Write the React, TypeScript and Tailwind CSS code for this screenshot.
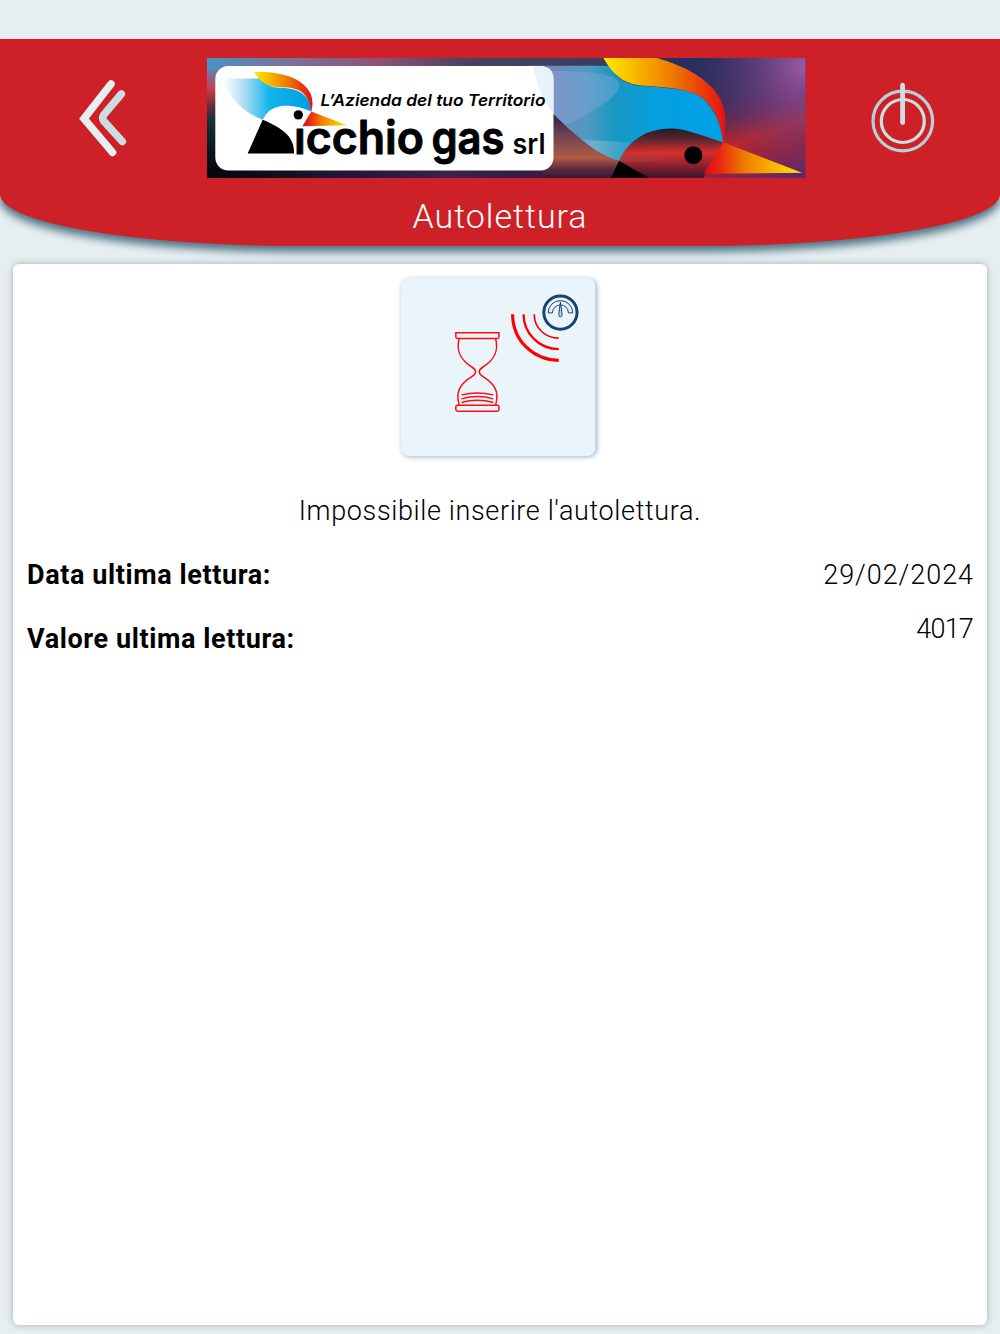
function BackIcon() {
  return (
    <svg viewBox="0 0 90 120" className="w-[90px] h-[120px]" fill="none" strokeLinecap="round" strokeLinejoin="miter">
      <path d="M61.3 34 L44 54.6 Q41.5 58 44 61.4 L62.3 81.5" stroke="#ccdde2" strokeWidth="7.6" />
      <path d="M51 24 L24 58.6 L52.5 92.4" stroke="#e6eef0" strokeWidth="7.6" />
    </svg>
  );
}

function PowerIcon() {
  return (
    <svg viewBox="0 0 110 120" className="w-[110px] h-[120px]" fill="none">
      <circle cx="52.8" cy="61" r="29.8" stroke="#b5d0d6" strokeWidth="3.2" />
      <circle cx="52.8" cy="61" r="21.5" stroke="#ccdfe3" strokeWidth="3.2" />
      <path d="M52.6 25.2V62.6" stroke="#ccdfe3" strokeWidth="4.8" strokeLinecap="round" />
    </svg>
  );
}

function Logo() {
  return (
    <svg viewBox="0 0 598.5 120" className="w-[598.5px] h-[120px] overflow-hidden" preserveAspectRatio="none">
      <defs>
        <linearGradient id="edge" x1="0" y1="0" x2="0" y2="1">
          <stop offset="0" stopColor="#4793c4" />
          <stop offset=".14" stopColor="#806f96" />
          <stop offset=".27" stopColor="#c43c48" />
          <stop offset=".4" stopColor="#692d3c" />
          <stop offset=".52" stopColor="#12333b" />
          <stop offset=".8" stopColor="#08151a" />
          <stop offset="1" stopColor="#050509" />
        </linearGradient>
        <linearGradient id="top" x1="0" y1="0" x2="1" y2="0">
          <stop offset="0" stopColor="#4793c4" />
          <stop offset=".2" stopColor="#7c7199" />
          <stop offset=".42" stopColor="#8f5274" />
          <stop offset=".64" stopColor="#46425f" />
          <stop offset="1" stopColor="#3a3b60" />
        </linearGradient>
        <linearGradient id="bottom" x1="0" y1="0" x2="1" y2="0">
          <stop offset="0" stopColor="#050509" />
          <stop offset=".3" stopColor="#1e1530" />
          <stop offset=".6" stopColor="#3a2148" />
          <stop offset="1" stopColor="#35173a" />
        </linearGradient>
        <linearGradient id="warm" x1="0" y1="0" x2="0" y2="1">
          <stop offset="0" stopColor="#3a3358" />
          <stop offset=".45" stopColor="#3b2240" />
          <stop offset=".62" stopColor="#6d4452" />
          <stop offset=".82" stopColor="#b25a44" />
          <stop offset=".92" stopColor="#5c2a40" />
          <stop offset="1" stopColor="#35173a" />
        </linearGradient>
        <linearGradient id="night" gradientUnits="userSpaceOnUse" x1="475" y1="0" x2="525" y2="140">
          <stop offset="0" stopColor="#232f60" />
          <stop offset=".35" stopColor="#3a2c5a" />
          <stop offset=".5" stopColor="#63284d" />
          <stop offset=".66" stopColor="#c1242c" />
          <stop offset=".78" stopColor="#a32138" />
          <stop offset="1" stopColor="#60276a" />
        </linearGradient>
        <radialGradient id="violet" gradientUnits="userSpaceOnUse" cx="598" cy="8" r="110">
          <stop offset="0" stopColor="#9a5aa5" />
          <stop offset=".3" stopColor="#80498f" stopOpacity=".8" />
          <stop offset="1" stopColor="#4a3970" stopOpacity="0" />
        </radialGradient>
        <linearGradient id="throat" x1="0" y1="0" x2="0" y2="1">
          <stop offset="0" stopColor="#1b1520" />
          <stop offset=".25" stopColor="#55262f" />
          <stop offset=".52" stopColor="#d92c2b" />
          <stop offset=".7" stopColor="#a1242f" />
          <stop offset="1" stopColor="#3b142c" />
        </linearGradient>
        <linearGradient id="wing" x1="0" y1="0" x2="1" y2="0">
          <stop offset="0" stopColor="#fff" />
          <stop offset=".25" stopColor="#a9daf3" />
          <stop offset=".52" stopColor="#12b5ed" />
          <stop offset="1" stopColor="#029be0" />
        </linearGradient>
        <linearGradient id="bigWing" gradientUnits="userSpaceOnUse" x1="-110" y1="0" x2="400" y2="0">
          <stop offset="0" stopColor="#7489b8" />
          <stop offset=".2" stopColor="#4f9ac2" />
          <stop offset=".36" stopColor="#1897c0" />
          <stop offset=".6" stopColor="#039fde" />
          <stop offset="1" stopColor="#02a0e8" />
        </linearGradient>
        <linearGradient id="haze" gradientUnits="userSpaceOnUse" x1="-60" y1="0" x2="120" y2="0">
          <stop offset="0" stopColor="#9dc4d6" stopOpacity="0" />
          <stop offset=".4" stopColor="#9dc4d6" stopOpacity=".5" />
          <stop offset="1" stopColor="#9dc4d6" stopOpacity=".2" />
        </linearGradient>
        <linearGradient id="rust" gradientUnits="userSpaceOnUse" x1="0" y1="0" x2="300" y2="0">
          <stop offset="0" stopColor="#a85444" />
          <stop offset="1" stopColor="#a85444" stopOpacity="0" />
        </linearGradient>
        <linearGradient id="crest" x1="0" y1="0" x2="1" y2="0">
          <stop offset="0" stopColor="#ffec00" />
          <stop offset=".55" stopColor="#f07d00" />
          <stop offset="1" stopColor="#e60f14" />
        </linearGradient>
        <linearGradient id="beak" x1="0" y1="0" x2="1" y2="0">
          <stop offset="0" stopColor="#e60713" />
          <stop offset=".15" stopColor="#e62512" />
          <stop offset=".42" stopColor="#ef7d00" />
          <stop offset="1" stopColor="#ffec00" />
        </linearGradient>
      </defs>

      {/* background */}
      <rect width="598.5" height="120" fill="url(#night)" />
      <rect x="400" width="198.5" height="120" fill="url(#violet)" />
      <rect width="20" height="120" fill="url(#edge)" />
      <rect width="410" height="12" fill="url(#top)" />
      <rect y="110" width="400" height="10" fill="url(#bottom)" />
      <rect x="335" y="8" width="80" height="112" fill="url(#warm)" />

      {/* large bird */}
      <g transform="translate(383 -7.5) scale(.33333)">
        <path d="M90 225 H210 Q300 220 400 275 L340 382 H90Z" fill="url(#throat)" />
        <path d="M90 310 Q200 300 290 290 L280 335 H90Z" fill="url(#rust)" opacity=".5" />
        <path d="M-185 46 H58 Q85 95 135 104 C210 112 300 110 340 145 Q392 195 399 275 C340 257 285 233 240 234 C160 236 115 275 87 331 C40 316 0 290 -40 255 C-70 230 -90 210 -110 190 Q-150 130 -185 46Z" fill="url(#bigWing)" />
        <path d="M-185 60 C20 60 86 72 88 100 C90 135 40 160 -15 195 C-50 215 -70 225 -78 220 Q-120 190 -150 130Z" fill="#8fa8e0" opacity=".4" />
        <path d="M-25 266 C50 272 85 272 122 277 Q98 304 87 331 C45 318 10 298 -25 266Z" fill="url(#haze)" />
        <path d="M40 22 H200 C330 60 400 120 406 200 Q408 240 400 275 C390 190 350 140 310 128 C240 104 170 112 125 100 C85 88 58 55 40 22Z" fill="url(#crest)" />
        <circle cx="310" cy="314" r="27" fill="#000" />
        <path d="M87 331 L176 382 H63Z" fill="#000" />
        <path d="M399 275 L636 367 L341 370Z" fill="url(#beak)" />
      </g>

      {/* label */}
      <rect x="8.3" y="8" width="338.2" height="104.6" rx="13" fill="#fff" />
      <path d="M326 8 H334 Q346.5 9 346.5 21 V56 Q332 38 326 8Z" fill="#e6f3fb" />

      <text x="113.5" y="48" textLength="225" lengthAdjust="spacingAndGlyphs" fontFamily="Inter, 'Liberation Sans', sans-serif" fontWeight="600" fontStyle="italic" fontSize="16.5">
        L’Azienda del tuo Territorio
      </text>
      <g fontFamily="Inter, 'Liberation Sans', sans-serif" fontWeight="600" fill="#000" stroke="#000" strokeWidth="1" strokeLinejoin="round">
        <text x="87" y="95.5" textLength="130" lengthAdjust="spacingAndGlyphs" fontSize="46">icchio</text>
        <text x="224.5" y="95.5" textLength="73" lengthAdjust="spacingAndGlyphs" fontSize="46">gas</text>
        <text x="305.5" y="95.5" textLength="33" lengthAdjust="spacingAndGlyphs" fontSize="29" strokeWidth="0">srl</text>
      </g>

      {/* small bird, its eye is the dot of the first i */}
      <g transform="translate(-7 -7.5) scale(.33333)">
        <path d="M272 180 H322 V230 H272Z" fill="#fff" />
        <path d="M70 84 H180 Q205 112 240 112 C300 112 334 140 334 183 C295 168 270 164 240 167 Q205 172 188 208 C125 183 85 140 70 84Z" fill="url(#wing)" />
        <path d="M162 65 C250 62 310 85 332 130 Q342 155 334 183 C328 140 310 120 280 114 C250 108 235 113 208 106 Q180 94 162 65Z" fill="url(#crest)" />
        <path d="M334 183 L441 224 L307 227Z" fill="url(#beak)" />
        <path d="M188 208 C240 230 284 255 282 309 H143Z" fill="#000" />
        <circle cx="295" cy="193" r="14" fill="#000" />
      </g>
    </svg>
  );
}

function WaitingMeterIcon() {
  return (
    <svg viewBox="34 38 580 536" className="w-full h-full" fill="none">
      <g stroke="#fe0d12" strokeWidth="4.5">
        <path d="M197 203 H327 V215 Q327 220 322 220 H202 Q197 220 197 215Z" />
        <path d="M202 421 H322 Q327 421 327 426 V434 Q327 439 322 439 H202 Q197 439 197 434 V426 Q197 421 202 421Z" />
        <path d="M207 221 C197 260 212 285 245 306 Q268 320 245 335 C208 358 196 382 207 420" />
        <path d="M317 221 C327 260 312 285 279 306 Q256 320 279 335 C316 358 328 382 317 420" />
        <path d="M214 390 Q262 378 310 390 M214 402 Q262 388 310 402 M214 413 Q262 399 310 413" />
      </g>
      <g stroke="#fe0000">
        <path d="M368 147 C368 225 430 286 507 286" strokeWidth="9.5" />
        <path d="M401 147 C401 207 450 252 507 252" strokeWidth="7" />
        <path d="M433 147 C433 190 468 219 507 219" strokeWidth="5" />
      </g>
      <g stroke="#1b4071">
        <circle cx="512" cy="142" r="50" strokeWidth="9" />
        <path d="M475 143 A37 37 0 0 1 549 143 H536 A24 24 0 0 0 488 143Z" strokeWidth="3" />
        <path d="M512 110 L507 148 Q507 155 512 155 Q517 155 517 148Z" fill="#c3d4e4" strokeWidth="3" />
      </g>
    </svg>
  );
}

export default function App() {
  return (
    <div className="h-[1334px] w-full bg-[#e6eef0] pt-[39px] flex flex-col text-black overflow-hidden font-[Roboto,'Open_Sans',sans-serif]">
      <header className="h-[207px] shrink-0 bg-[#cd2127] rounded-b-[300px_52px] shadow-[0_6px_8px_#4f7485]">
        <div className="flex items-start">
          <button className="ml-[60px] mt-[21px]" aria-label="Indietro">
            <BackIcon />
          </button>
          <div className="ml-[57px] mt-[18.5px]">
            <Logo />
          </div>
          <button className="ml-[44.5px] mt-[21px]" aria-label="Esci">
            <PowerIcon />
          </button>
        </div>
        <h1 className="mt-3 text-center text-white font-light text-[34px] leading-[48px] tracking-[1px]">Autolettura</h1>
      </header>

      <main className="mx-[13px] mt-[18px] h-[1061px] shrink-0 bg-white rounded-md shadow-[0_0_7px_#a5adb1] px-[14px] pt-[14px]">
        <div className="mx-auto -translate-x-[1.75px] w-[193.5px] h-[178px] bg-[#e9f4fb] rounded-lg shadow-[1px_1px_5px_#a3b2cc]">
          <WaitingMeterIcon />
        </div>
        <p className="mt-[35px] text-center font-light text-[27px] leading-10 tracking-[0.64px]">
          Impossibile inserire l'autolettura.
        </p>
        <div className="mt-6 flex justify-between text-[27px] leading-10">
          <div className="flex flex-col gap-6 font-bold tracking-[0.6px]">
            <span>Data ultima lettura:</span>
            <span>Valore ultima lettura:</span>
          </div>
          <div className="flex flex-col gap-[14px] text-right font-light">
            <span className="-mr-px tracking-[0.95px]">29/02/2024</span>
            <span className="tracking-[-0.8px]">4017</span>
          </div>
        </div>
      </main>
    </div>
  );
}
